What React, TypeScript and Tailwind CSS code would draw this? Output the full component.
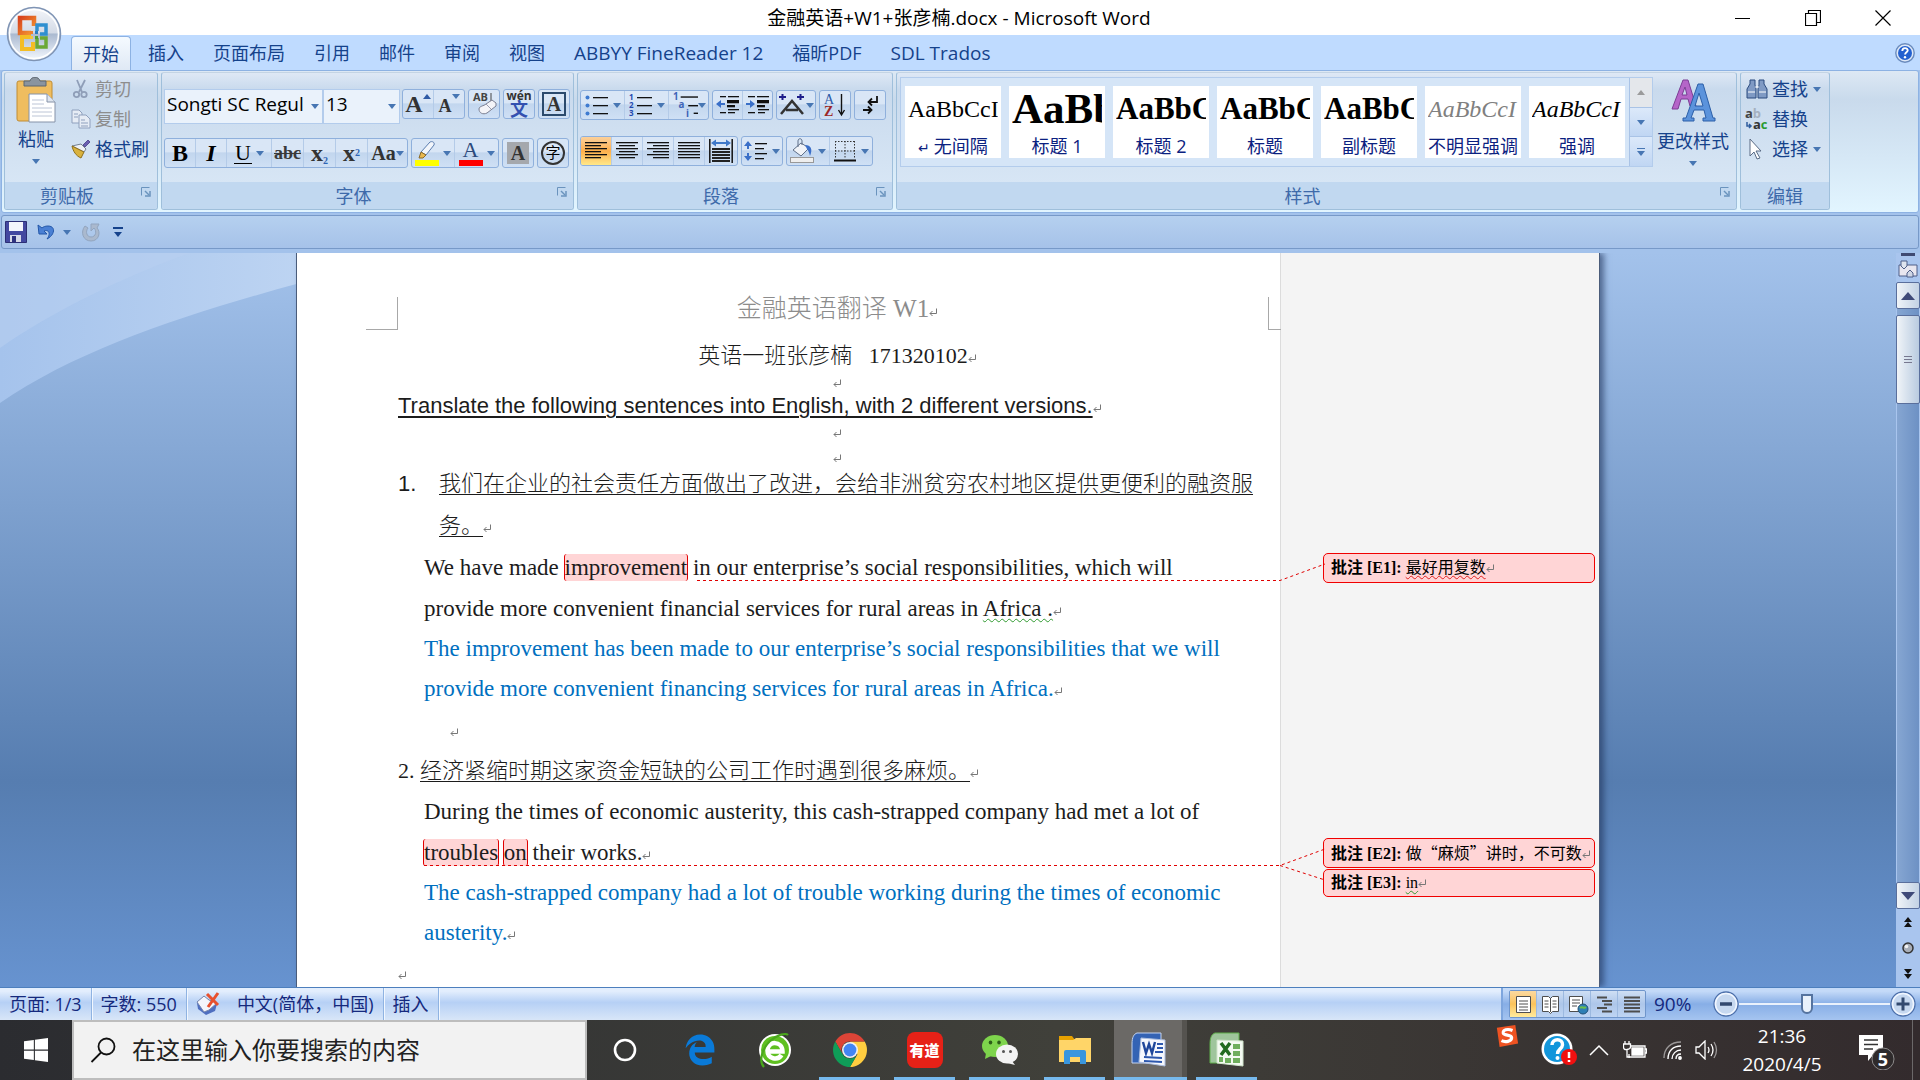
import type { ReactNode } from "react";
import { FaEdgeLegacy, FaWindows } from "react-icons/fa6";

const UI = "font-['Open_Sans','Noto_Sans_CJK_SC',sans-serif]";
const SERIF = "font-['Liberation_Serif','Noto_Sans_CJK_SC',serif]";

const tabs = [
  { name: "插入", size: "text-lg" },
  { name: "页面布局", size: "text-lg" },
  { name: "引用", size: "text-lg" },
  { name: "邮件", size: "text-lg" },
  { name: "审阅", size: "text-lg" },
  { name: "视图", size: "text-lg" },
  { name: "ABBYY FineReader 12", size: "text-[19px]" },
  { name: "福昕PDF", size: "text-lg" },
  { name: "SDL Trados", size: "text-[19px]" },
];

const styleCards = [
  { label: "无间隔", mark: true, look: "text-2xl text-black" },
  { label: "标题 1", look: "text-[43px] font-bold text-black" },
  { label: "标题 2", look: "text-[31px] font-bold text-black" },
  { label: "标题", look: "text-[31px] font-bold text-black" },
  { label: "副标题", look: "text-[31px] font-bold text-black" },
  { label: "不明显强调", look: "text-2xl italic text-[#808080]" },
  { label: "强调", look: "text-2xl italic text-black" },
];

const Caret = ({ className = "" }: { className?: string }) => (
  <svg viewBox="0 0 8 5" className={`h-[5px] w-2 shrink-0 ${className}`} fill="#4776b3">
    <path d="M0 0h8L4 5z" />
  </svg>
);

const Launcher = () => (
  <svg viewBox="0 0 10 10" className="h-2.5 w-2.5" fill="none" stroke="#6a93bd" strokeWidth="1">
    <path d="M.5 8.500V.5H8.500" />
    <path d="M4 4l4 4" strokeWidth="1.500" />
    <path d="M9 4v5H4" strokeWidth="1.500" />
  </svg>
);

// Titled box of the ribbon
const Group = ({
  title,
  width,
  launcher = true,
  children,
}: {
  title: string;
  width: string;
  launcher?: boolean;
  children: ReactNode;
}) => (
  <section
    className={`flex h-[138px] shrink-0 flex-col overflow-hidden rounded-[3px] border border-[#9fbfdb] border-t-[#c4d4e4] bg-linear-to-b from-[#dee8f5] from-0% via-[#c9daed] via-12% to-[#dbe9f7] ${width}`}
  >
    <div className="min-h-0 flex-1">{children}</div>
    <div className={`relative flex h-[27px] items-center justify-center bg-[#c1d8f0] ${launcher ? "pr-7" : ""}`}>
      <h2 className="text-lg leading-6 text-[#3e6aaa]">{title}</h2>
      {launcher && (
        <button aria-label={title} className="absolute top-[5px] right-[6px]">
          <Launcher />
        </button>
      )}
    </div>
  </section>
);

const ButtonSet = ({ children }: { children: ReactNode }) => (
  <div className="flex h-[30px] divide-x divide-[#b4cbe8] overflow-hidden rounded-[3px] border border-[#8fb0dc] bg-linear-to-b from-[#d9e6f6] from-45% via-[#c2d6ee] via-50% to-[#cfe0f5]">
    {children}
  </div>
);

const Tool = ({
  label,
  width = "w-[31px]",
  caret = false,
  active = false,
  children,
}: {
  label: string;
  width?: string;
  caret?: boolean;
  active?: boolean;
  children: ReactNode;
}) => (
  <button
    aria-label={label}
    className={`flex items-center justify-center ${width} ${caret ? "gap-1" : ""} ${
      active ? "bg-linear-to-b from-[#fbd09a] via-[#fdaf4b] to-[#ffe889]" : ""
    }`}
  >
    {children}
    {caret && <Caret />}
  </button>
);

// Rows of text drawn as [x, y, width]
const Lines = ({ rows, size = 24, children }: { rows: number[][]; size?: number; children?: ReactNode }) => (
  <svg viewBox="0 0 24 24" width={size} height={size} className="shrink-0">
    {rows.map(([x, y, w]) => (
      <rect key={`${x}-${y}`} x={x} y={y} width={w} height="1.300" fill="#111" />
    ))}
    {children}
  </svg>
);

const alignLeft = [[1, 3, 22], [1, 6, 16], [1, 9, 22], [1, 12, 16], [1, 15, 22], [1, 18, 16]];
const alignCenter = [[1, 3, 22], [4, 6, 16], [1, 9, 22], [4, 12, 16], [1, 15, 22], [4, 18, 16]];
const alignRight = [[1, 3, 22], [7, 6, 16], [1, 9, 22], [7, 12, 16], [1, 15, 22], [7, 18, 16]];
const alignFull = [[1, 3, 22], [1, 6, 22], [1, 9, 22], [1, 12, 22], [1, 15, 22], [1, 18, 22]];

const OfficeButton = () => (
  <button aria-label="Office" className="absolute top-1.5 left-1.5 z-10">
    <svg viewBox="0 0 56 56" className="h-14 w-14">
      <defs>
        <linearGradient id="orb" x1="0" y1="0" x2="0" y2="1">
          <stop offset="0" stopColor="#f4f6fa" />
          <stop offset=".48" stopColor="#d3dae6" />
          <stop offset=".5" stopColor="#aab9d0" />
          <stop offset="1" stopColor="#f5f9ff" />
        </linearGradient>
        <linearGradient id="warm" x1="0" y1="0" x2="1" y2="1">
          <stop offset="0" stopColor="#d8431c" />
          <stop offset="1" stopColor="#f59a33" />
        </linearGradient>
      </defs>
      <circle cx="28" cy="28" r="26.500" fill="url(#orb)" stroke="#7f94b4" strokeWidth="1.500" />
      <circle cx="28" cy="28" r="24.500" fill="none" stroke="#fff" strokeWidth="1.500" />
      <path d="M25 27h-11V12h14v8" fill="none" stroke="url(#warm)" strokeWidth="4.500" />
      <path d="M31 25v-6h9v9h-6" fill="none" stroke="#2e8fd0" strokeWidth="3.500" />
      <path d="M25 31h-9v12h11v-7" fill="none" stroke="#f3bd25" strokeWidth="4" />
      <path d="M31 32v9h9v-9h-6" fill="none" stroke="#6ba836" strokeWidth="3.500" />
      <path d="M24 25h3v3h-3z" fill="#f2802a" />
      <path d="M29 25h3v3h-3z" fill="#2a7cc0" />
      <path d="M24 30h3v3h-3z" fill="#f4c63c" />
      <path d="M29 30h3v3h-3z" fill="#4f9c30" />
    </svg>
  </button>
);

const TitleBar = () => (
  <header className="flex h-[35px] items-center bg-white text-black">
    <div className="flex-1" />
    <h1 className="text-[19px] leading-6">金融英语+W1+张彦楠.docx - Microsoft Word</h1>
    <div className="flex flex-1 justify-end pr-0.5">
      <button aria-label="最小化" className="flex w-[70px] justify-center">
        <svg viewBox="0 0 16 16" className="h-4 w-4" stroke="#000">
          <path d="M0 8.500h15" />
        </svg>
      </button>
      <button aria-label="还原" className="flex w-[70px] justify-center">
        <svg viewBox="0 0 16 16" className="h-4 w-4" fill="none" stroke="#000" strokeWidth="1.200">
          <path d="M.5 3.500h11v12H.5zM3.500 3.500v-3h12v12h-4" />
        </svg>
      </button>
      <button aria-label="关闭" className="flex w-[70px] justify-center">
        <svg viewBox="0 0 16 16" className="h-4 w-4" stroke="#000" strokeWidth="1.200">
          <path d="M.5.5l15 15M15.500.5l-15 15" />
        </svg>
      </button>
    </div>
  </header>
);

const TabRow = () => (
  <nav className="flex h-[35px] items-end bg-[#bfdbff] pl-[71px] text-lg leading-6 text-[#15428b]">
    <a
      href="#home"
      className="flex h-[34px] w-[60px] items-center justify-center rounded-t-[4px] border border-b-0 border-[#8db2e3] bg-linear-to-b from-[#f5faff] to-[#dfe9f5]"
    >
      开始
    </a>
    <div className="flex h-[34px] items-center gap-[29px] pl-[17px]">
      {tabs.map((tab) => (
        <a key={tab.name} href="#tab" className={`whitespace-nowrap ${tab.size}`}>
          {tab.name}
        </a>
      ))}
    </div>
    <button aria-label="帮助" className="mr-[5px] mb-[7px] ml-auto">
      <svg viewBox="0 0 20 20" className="h-5 w-5">
        <circle cx="10" cy="10" r="9.200" fill="#dfe9f8" stroke="#6a8bbd" strokeWidth="1.400" />
        <circle cx="10" cy="10" r="7" fill="#2360cf" />
        <path d="M7.300 8c0-4 5.600-3.600 5.400-.5-.2 1.800-2.600 1.800-2.600 4" fill="none" stroke="#fff" strokeWidth="1.900" />
        <circle cx="10" cy="14.200" r="1.200" fill="#fff" />
      </svg>
    </button>
  </nav>
);

const Clipboard = () => (
  <Group title="剪贴板" width="w-[154px]">
    <div className="flex pl-[11px] text-lg leading-6 text-[#15428b]">
      <button className="flex w-10 flex-col items-center pt-1">
        <svg viewBox="0 0 40 46" className="h-[46px] w-10">
          <rect x="1" y="4" width="35" height="40" rx="2" fill="#efbd5f" stroke="#c08c34" />
          <path d="M8 4h6c1-5 9-5 10 0h6v5H8z" fill="#8a949f" stroke="#5d6670" />
          <path d="M13 17h18l8 8v20H13z" fill="#fff" stroke="#8592a8" />
          <path d="M31 17v8h8" fill="#dfe5ee" stroke="#8592a8" />
          <path d="M16 23h12M16 27h12M16 31h20M16 35h20M16 39h20" stroke="#bcc5d6" />
        </svg>
        <span className="-mx-2 pt-1 whitespace-nowrap">粘贴</span>
        <Caret className="mt-2" />
      </button>
      <div className="flex flex-col items-start gap-1.5 pt-1 pl-[15px]">
        <button className="flex items-center gap-1 text-[#8d8d8d]">
          <svg viewBox="0 0 20 20" className="h-5 w-5" fill="none" stroke="#8f9eb8" strokeWidth="1.800">
            <path d="M6 1l5 12M14 1L8 13" />
            <circle cx="5.500" cy="15.500" r="2.700" />
            <circle cx="13" cy="15.500" r="2.700" />
          </svg>
          剪切
        </button>
        <button className="flex items-center gap-1 text-[#8d8d8d]">
          <svg viewBox="0 0 20 20" className="h-5 w-5" fill="#e6ecf5" stroke="#8fa0bd">
            <path d="M1 1h7l3 3v10H1z" />
            <path d="M8 6h7l4 4v9H8z" />
            <path d="M3 5h4M3 8h4M10 11h4M10 14h7M10 17h7" />
          </svg>
          复制
        </button>
        <button className="flex items-center gap-1">
          <svg viewBox="0 0 20 20" className="h-5 w-5">
            <path d="M12 6l5-5 2 2-5 5z" fill="#6b5fb0" stroke="#453c86" strokeWidth=".8" />
            <path d="M1 7l9-2 5 5-2 3z" fill="#eef1f5" stroke="#74808f" />
            <path d="M1 7l12 6-3 6C5 17 2 12 1 7z" fill="#d9b23e" stroke="#8e6f1c" />
          </svg>
          格式刷
        </button>
      </div>
    </div>
  </Group>
);

const FontGroup = () => (
  <Group title="字体" width="w-[413px]">
    <div className="flex flex-col gap-3.5 pt-4 pl-0.5 text-black">
      <div className="flex items-start gap-[3px]">
        <div className="-mr-px flex">
          <label className="relative flex">
            <select
              aria-label="字体"
              className="h-[35px] w-[159px] appearance-none overflow-hidden border border-[#b3ccec] bg-[#eaf2fb] pr-4 pb-1.5 pl-0.5 text-[19px] leading-6"
            >
              <option>Songti SC Regul</option>
            </select>
            <Caret className="pointer-events-none absolute top-[15px] right-1" />
          </label>
          <label className="relative flex">
            <select
              aria-label="字号"
              className="h-[35px] w-[77px] appearance-none border border-[#b3ccec] bg-[#eaf2fb] pb-1.5 pl-0.5 text-[19px] leading-6"
            >
              <option>13</option>
            </select>
            <Caret className="pointer-events-none absolute top-[15px] right-1" />
          </label>
        </div>
        <ButtonSet>
          <Tool label="增大字体">
            <span className={`${SERIF} text-2xl leading-7 font-bold text-[#333]`}>A</span>
            <svg viewBox="0 0 8 5" className="mb-4 h-[5px] w-2" fill="#2e5aa5">
              <path d="M0 5h8L4 0z" />
            </svg>
          </Tool>
          <Tool label="缩小字体" width="w-[30px]">
            <span className={`${SERIF} pt-1 text-lg leading-6 font-bold text-[#333]`}>A</span>
            <Caret className="mb-4" />
          </Tool>
        </ButtonSet>
        <ButtonSet>
          <Tool label="清除格式" width="w-[30px]">
            <svg viewBox="0 0 28 28" className="h-7 w-7">
              <text x="3" y="11" fontSize="11" fontWeight="bold" fill="#444">
                AB
              </text>
              <path d="M21 3v9" stroke="#444" />
              <path d="M9 19c0-3 5-3 7-5l6-4 4 3v3l-9 7c-4 2-8 0-8-4z" fill="#f4f4f8" stroke="#7b7f92" />
              <path d="M16 14l5 5" stroke="#9a9db0" />
            </svg>
          </Tool>
        </ButtonSet>
        <ButtonSet>
          <Tool label="拼音指南" width="w-[30px]">
            <span className="flex flex-col items-center">
              <span className="text-xs leading-[10px] font-bold text-[#333]">wén</span>
              <span className="text-lg leading-4 font-bold text-[#3350b0]">文</span>
            </span>
          </Tool>
        </ButtonSet>
        <ButtonSet>
          <Tool label="字符边框" width="w-[30px]">
            <span className={`${SERIF} h-6 w-6 border-2 border-[#2b4a6d] text-xl leading-5 font-bold text-[#333]`}>A</span>
          </Tool>
        </ButtonSet>
      </div>
      <div className={`${SERIF} flex gap-[3px]`}>
        <ButtonSet>
          <Tool label="加粗">
            <span className="text-2xl leading-7 font-bold">B</span>
          </Tool>
          <Tool label="倾斜">
            <span className="text-2xl leading-7 font-bold italic">I</span>
          </Tool>
          <Tool label="下划线" width="w-[45px]" caret>
            <span className="border-b border-black px-px text-[22px] leading-5">U</span>
          </Tool>
          <Tool label="删除线" width="w-8">
            <span className="text-lg leading-6 font-bold text-[#3a3a3a] line-through">abc</span>
          </Tool>
          <Tool label="下标" width="w-8">
            <span className="text-2xl leading-6 font-bold text-[#333]">
              x<sub className="text-[10px] text-[#2e64b4]">2</sub>
            </span>
          </Tool>
          <Tool label="上标" width="w-8">
            <span className="text-2xl leading-6 font-bold text-[#333]">
              x<sup className="text-[10px] text-[#2e64b4]">2</sup>
            </span>
          </Tool>
          <button aria-label="更改大小写" className="flex w-[39px] items-center justify-center">
            <span className="text-xl leading-6 font-bold text-[#333]">Aa</span>
            <Caret />
          </button>
        </ButtonSet>
        <ButtonSet>
          <Tool label="突出显示" width="w-[43px]" caret>
            <svg viewBox="0 0 24 26" className="h-[26px] w-6">
              <rect y="20" width="24" height="6" fill="#ff0" />
              <path d="M6 12l9-10c2-1 5 0 4 3l-8 10z" fill="#f3f6fb" stroke="#5b7daf" />
              <path d="M6 12l5 3-3 3H4z" fill="#e9b84e" stroke="#8b6a28" />
            </svg>
          </Tool>
          <Tool label="字体颜色" width="w-[43px]" caret>
            <span className="flex flex-col items-center text-[#2c4a7c]">
              <span className="text-[22px] leading-5">A</span>
              <span className="h-1.5 w-6 bg-[#f00]" />
            </span>
          </Tool>
        </ButtonSet>
        <ButtonSet>
          <Tool label="字符底纹" width="w-[30px]">
            <span className="h-[22px] w-[22px] bg-[#a5a8ad] text-xl leading-[22px] font-bold text-[#333]">A</span>
          </Tool>
        </ButtonSet>
        <ButtonSet>
          <Tool label="带圈字符" width="w-[30px]">
            <span className="h-6 w-6 rounded-full border-2 border-[#333] text-[15px] leading-5">字</span>
          </Tool>
        </ButtonSet>
      </div>
    </div>
  </Group>
);

const ParagraphGroup = () => (
  <Group title="段落" width="w-[316px]">
    <div className="flex flex-col gap-4 pt-[17px] pl-0.5">
      <div className="flex gap-[3px]">
        <ButtonSet>
          <Tool label="项目符号" width="w-[44px]" caret>
            <Lines rows={[[8, 4, 15], [8, 12, 15], [8, 20, 15]]}>
              <g fill="#3f7bd0">
                <circle cx="2.500" cy="4.500" r="2" />
                <circle cx="2.500" cy="12.500" r="2" />
                <circle cx="2.500" cy="20.500" r="2" />
              </g>
            </Lines>
          </Tool>
          <Tool label="编号" width="w-[44px]" caret>
            <Lines rows={[[8, 4, 15], [8, 12, 15], [8, 20, 15]]}>
              <g fill="#2449b0" fontSize="8" fontWeight="bold">
                <text x="0" y="7">1</text>
                <text x="0" y="15">2</text>
                <text x="0" y="23">3</text>
              </g>
            </Lines>
          </Tool>
          <button aria-label="多级列表" className="flex w-[39px] items-center justify-center">
            <Lines rows={[[8, 4, 16], [15, 12, 9], [20, 19, 4]]} size={26}>
              <g fill="#3f64b8" fontSize="9" fontWeight="bold">
                <text x="1" y="7">1</text>
                <text x="6" y="15">a</text>
                <text x="13" y="23">i</text>
              </g>
            </Lines>
            <Caret />
          </button>
        </ButtonSet>
        <ButtonSet>
          <Tool label="减少缩进量" width="w-[30px]">
            <Lines rows={[[4, 3, 6], [12, 3, 11], [11, 7, 12], [11, 8, 12], [11, 9, 12], [11, 12, 8], [11, 13, 8], [12, 16, 11], [4, 19, 6], [12, 19, 7]]}>
              <path d="M0 11l5-4v3h4v2H5v3z" fill="#3a6fc8" />
            </Lines>
          </Tool>
          <Tool label="增加缩进量" width="w-[29px]">
            <Lines rows={[[2, 3, 7], [11, 3, 12], [11, 7, 12], [11, 8, 12], [11, 9, 12], [11, 12, 8], [11, 13, 8], [12, 16, 11], [2, 19, 7], [12, 19, 7]]}>
              <path d="M9 11L4 7v3H0v2h4v3z" fill="#3a6fc8" />
            </Lines>
          </Tool>
        </ButtonSet>
        <ButtonSet>
          <button aria-label="中文版式" className="flex w-[38px] items-center justify-center">
            <svg viewBox="0 0 28 26" className="h-[26px] w-7" fill="none" stroke="#333" strokeWidth="2.500">
              <path d="M3 22L14 9l11 13M8 18h12" />
              <path d="M1 5h7M4.500 2v6M19 5h7M22.500 2v6" stroke="#1d1d8a" strokeWidth="2" />
            </svg>
            <Caret />
          </button>
        </ButtonSet>
        <ButtonSet>
          <Tool label="排序" width="w-[30px]">
            <svg viewBox="0 0 24 26" className={`h-[26px] w-6 ${SERIF}`}>
              <text x="1" y="12" fontSize="14" fill="#2c5aa8">A</text>
              <text x="1" y="24" fontSize="14" fontWeight="bold" fill="#9c2727">Z</text>
              <path d="M18.500 2v20M15.500 18l3 5 3-5" fill="none" stroke="#111" strokeWidth="1.400" />
            </svg>
          </Tool>
        </ButtonSet>
        <ButtonSet>
          <Tool label="显示编辑标记" width="w-[30px]">
            <svg viewBox="0 0 24 26" className="h-[26px] w-6" fill="none" stroke="#111" strokeWidth="1.800">
              <path d="M19 4v6h-8M14 6.500L10.500 10l3.500 3.500M5 18h8M10 14.500l3.500 3.500-3.500 3.500" />
            </svg>
          </Tool>
        </ButtonSet>
      </div>
      <div className="flex gap-[3px]">
        <ButtonSet>
          <Tool label="左对齐" active>
            <Lines rows={alignLeft} />
          </Tool>
          <Tool label="居中">
            <Lines rows={alignCenter} />
          </Tool>
          <Tool label="右对齐">
            <Lines rows={alignRight} />
          </Tool>
          <Tool label="两端对齐">
            <Lines rows={alignFull} />
          </Tool>
          <Tool label="分散对齐" width="w-8">
            <svg viewBox="0 0 24 24" className="h-6 w-6">
              <path d="M.8 0v24M23.200 0v24" stroke="#111" strokeWidth="1.500" />
              <path d="M2 4l5-3.500V3h10V.5L22 4l-5 3.500V5H7v2.500z" fill="#3f78c8" />
              <path d="M3 10h18M3 13h18M3 16h18M3 19h18M3 22h18" stroke="#222" strokeWidth="1.800" />
            </svg>
          </Tool>
        </ButtonSet>
        <ButtonSet>
          <Tool label="行距" width="w-10" caret>
            <Lines rows={[[11, 4, 12], [11, 9, 9], [11, 14, 12], [11, 19, 9]]}>
              <path d="M4 2l4 5H5v3H3V7H0zM4 22l4-5H5v-3H3v3H0z" fill="#3a6fc8" />
            </Lines>
          </Tool>
        </ButtonSet>
        <ButtonSet>
          <Tool label="底纹" width="w-[43px]" caret>
            <svg viewBox="0 0 24 26" className="h-[26px] w-6">
              <rect x=".5" y="19.500" width="23" height="5" fill="#eee" stroke="#999" />
              <path d="M3 12l8-7 8 5-8 8z" fill="#f0f3f8" stroke="#5f6f88" />
              <path d="M8 9V3c0-3 4-3 4 0v4" fill="none" stroke="#5f6f88" />
              <path d="M15 7c6 0 8 4 5 11-1-4-2-6-3-7z" fill="#3b6fc9" />
            </svg>
          </Tool>
          <Tool label="框线" width="w-[42px]" caret>
            <svg viewBox="0 0 24 26" className="h-[26px] w-6" fill="none" stroke="#333">
              <path d="M2 3.500h20M2 13h20M2.500 3v18M12 3v18M21.500 3v18" strokeDasharray="1.500 1.500" />
              <path d="M1 22.500h22" stroke="#111" strokeWidth="2" />
            </svg>
          </Tool>
        </ButtonSet>
      </div>
    </div>
  </Group>
);

const StylesGroup = () => (
  <Group title="样式" width="w-[841px]">
    <div className="flex pt-1 pl-[3px]">
      <div className="flex h-[90px] border border-[#b3ccec] bg-[#d5e5f7]">
        <div className="flex gap-2 py-2 pr-1 pl-1">
          {styleCards.map((card) => (
            <button
              key={card.label}
              className="flex h-[72px] w-24 flex-col overflow-hidden bg-white text-[#0b2180]"
            >
              <span className="flex h-12 w-full px-[3px]">
                <span className={`${SERIF} w-full overflow-hidden text-left leading-[46px] whitespace-nowrap ${card.look}`}>
                  AaBbCcI
                </span>
              </span>
              <span className="w-full text-center text-lg leading-6 whitespace-nowrap">
                {card.mark && <span className="text-sm">↵ </span>}
                {card.label}
              </span>
            </button>
          ))}
        </div>
        <div className="flex w-[23px] flex-col divide-y divide-[#a9c3e6] border-l border-[#a9c3e6]">
          <button aria-label="上一行" className="flex flex-1 items-center justify-center bg-[#e4e7eb]">
            <svg viewBox="0 0 8 5" className="h-[5px] w-2" fill="#9b9b9b">
              <path d="M0 5h8L4 0z" />
            </svg>
          </button>
          <button aria-label="下一行" className="flex flex-1 items-center justify-center bg-linear-to-b from-[#dce9fa] to-[#c0d6f3]">
            <Caret />
          </button>
          <button
            aria-label="其他"
            className="flex flex-1 flex-col items-center justify-center gap-0.5 bg-linear-to-b from-[#dce9fa] to-[#c0d6f3]"
          >
            <span className="h-px w-2 bg-[#4776b3]" />
            <Caret />
          </button>
        </div>
      </div>
      <button className="flex w-20 flex-col items-center text-lg leading-6 text-[#15428b]">
        <svg viewBox="0 0 46 46" className="h-[46px] w-[46px]">
          <path d="M2 32L13 3h5l8 26h-6l-2-7h-7l-3 10zM12 18h5l-2-8z" fill="#b565c8" stroke="#7c3d95" />
          <path d="M13 44v-3h3L28 7h5l10 34h2v3H33v-3h3l-2-8H24l-3 8h3v3zM25 29h8l-4-13z" fill="#5b93dc" stroke="#2c5fa8" />
        </svg>
        <span className="pt-1.5 whitespace-nowrap">更改样式</span>
        <Caret className="mt-2" />
      </button>
    </div>
  </Group>
);

const EditingGroup = () => (
  <Group title="编辑" width="w-[90px]" launcher={false}>
    <div className="flex flex-col items-start gap-1.5 pt-1 pl-1 text-lg leading-6 text-[#15428b]">
      <button className="flex items-center gap-[3px]">
        <svg viewBox="0 0 24 22" className="h-[22px] w-6" stroke="#2b4a7e" fill="#7f9ac4">
          <path d="M5 2h5v5l1 4v9H2v-9l3-5zM14 2h5v4l3 5v9h-9v-9l1-4z" />
          <path d="M3 14h7M14 14h7M10 9h4" stroke="#fff" />
        </svg>
        查找
        <Caret className="ml-0.5" />
      </button>
      <button className="flex items-center gap-[3px]">
        <svg viewBox="0 0 24 24" className="h-6 w-6" fontSize="13" fontWeight="bold">
          <text x="0" y="11" fill="#444">
            a<tspan fill="#a5b0bf">b</tspan>
          </text>
          <text x="8" y="22" fill="#333">
            a<tspan fill="#2a9a32">c</tspan>
          </text>
          <path d="M2 15v4h4M4 17l2 2-2 2" fill="none" stroke="#2f5d9e" strokeWidth="1.500" />
        </svg>
        替换
      </button>
      <button className="flex items-center gap-[3px]">
        <svg viewBox="0 0 24 24" className="h-6 w-6">
          <path d="M5 2l11 12h-5l4 7-3 1-3-7-4 4z" fill="#fff" stroke="#5a6b85" />
        </svg>
        选择
        <Caret className="ml-0.5" />
      </button>
    </div>
  </Group>
);

const QuickAccess = () => (
  <div className="mx-px mt-0.5 flex h-[34px] items-center rounded-[3px] border border-[#7799c8] bg-linear-to-b from-[#b5d0ef] to-[#a6c2e9] pl-[3px]">
    <button aria-label="保存">
      <svg viewBox="0 0 22 22" className="h-[22px] w-[22px]">
        <path d="M.5.5h21v21H.5z" fill="#4348a0" stroke="#2c2f75" />
        <path d="M4 1h14v9H4z" fill="#f3f6fc" />
        <path d="M5 14h11v7H5z" fill="#d6d9e8" />
        <path d="M7 15h4v6H7z" fill="#2f3380" />
      </svg>
    </button>
    <button aria-label="撤消" className="ml-2.5">
      <svg viewBox="0 0 20 20" className="h-5 w-5">
        <path d="M1 3l1 9h8L7 9c5-2 7 3 3 8 8-4 9-13 1-13-3 0-5 1-6 2z" fill="#4a80d4" stroke="#2357a8" />
      </svg>
    </button>
    <Caret className="ml-1.5" />
    <button aria-label="恢复" className="ml-2.5">
      <svg viewBox="0 0 20 20" className="h-5 w-5">
        <path d="M18 2h-8v7l3-3c3 3 2 9-3 9-4 0-6-5-3-9L4 4c-5 6-2 15 6 15s10-9 6-13z" fill="#aab9ce" stroke="#92a5bf" />
      </svg>
    </button>
    <button aria-label="自定义快速访问工具栏" className="ml-3 flex flex-col items-center gap-[3px]">
      <span className="h-0.5 w-2.5 bg-[#15428b]" />
      <svg viewBox="0 0 8 5" className="h-[5px] w-2" fill="#15428b">
        <path d="M0 0h8L4 5z" />
      </svg>
    </button>
  </div>
);

// Paragraph mark. It has no width so that centred lines stay centred.
const Mark = () => (
  <span className="inline-block w-0 align-baseline leading-none">
    <svg viewBox="0 0 9 9" className="h-[9px] w-[9px] max-w-none" fill="none" stroke="#777">
      <path d="M7.500.5v5H1M3.500 3L1 5.500 3.500 8" />
    </svg>
  </span>
);

const Noted = ({ children }: { children: ReactNode }) => (
  <span className="-mx-px rounded-[3px] border-x border-[#e00000] bg-[#ffd5d6] py-px">{children}</span>
);

const Comment = ({ name, size, children }: { name: string; size: string; children: ReactNode }) => (
  <p className={`flex items-center rounded-[5px] border border-[#f00000] bg-[#ffd5d6] pl-[7px] whitespace-nowrap ${size}`}>
    <span>
      <b>批注 [{name}]: </b>
      {children}
      <Mark />
    </span>
  </p>
);

const Page = () => (
  <article className={`relative flex w-[1304px] shrink-0 overflow-hidden border-x border-[#4a5c7a] bg-white shadow-[4px_0_6px_rgba(30,50,90,0.6)] ${SERIF}`}>
    <span className="absolute top-11 left-[69px] h-[33px] w-8 border-r border-b border-[#a8a8a8]" />
    <span className="absolute top-11 left-[971px] h-[33px] w-[13px] border-b border-l border-[#a8a8a8]" />

    <div className="flex-1 pt-[22px] pr-3 pl-[101px] text-[22px] font-light whitespace-nowrap text-[#1c1c1c]">
      <h2 className="text-center text-[25px] leading-[68px] text-[#8c8c8c]">
        金融英语翻译 W1
        <Mark />
      </h2>
      <p className="text-center leading-[25px]">
        英语一班张彦楠&nbsp;&nbsp; 171320102
        <Mark />
      </p>
      <p className="text-center leading-[25px]">
        <Mark />
      </p>
      <p className="font-['Liberation_Sans',sans-serif] leading-[25px]">
        <span className="underline decoration-2 underline-offset-[3px]">
          Translate the following sentences into English, with 2 different versions.
        </span>
        <Mark />
      </p>
      <p className="text-center leading-[25px]">
        <Mark />
      </p>
      <p className="text-center leading-[25px]">
        <Mark />
      </p>
      <div className="-mt-[5px] flex leading-[42px]">
        <span className="w-[41px] font-['Liberation_Sans',sans-serif]">1.</span>
        <p className="underline decoration-1 underline-offset-[3px]">
          我们在企业的社会责任方面做出了改进，会给非洲贫穷农村地区提供更便利的融资服
          <br />
          务。
          <Mark />
        </p>
      </div>
      <div className="pl-[26px] text-[23px]">
        <p className="leading-[41px]">
          We have made <Noted>improvement</Noted> in our enterprise’s social responsibilities, which will
          <br />
          provide more convenient financial services for rural areas in{" "}
          <span className="underline decoration-[#2f9a2f] decoration-wavy decoration-1 underline-offset-2">Africa .</span>
          <Mark />
        </p>
        <p className="leading-10 text-[#0070c0]">
          The improvement has been made to our enterprise’s social responsibilities that we will
          <br />
          provide more convenient financing services for rural areas in Africa.
          <Mark />
        </p>
        <p className="pl-[26px] leading-[41px]">
          <Mark />
        </p>
      </div>
      <p className="leading-[41px]">
        2.{" "}
        <span className="underline decoration-1 underline-offset-[3px]">
          经济紧缩时期这家资金短缺的公司工作时遇到很多麻烦。
        </span>
        <Mark />
      </p>
      <div className="pl-[26px] text-[23px]">
        <p className="leading-[41px]">
          During the times of economic austerity, this cash-strapped company had met a lot of
          <br />
          <Noted>troubles</Noted> <Noted>on</Noted> their works.
          <Mark />
        </p>
        <p className="leading-10 text-[#0070c0]">
          The cash-strapped company had a lot of trouble working during the times of economic
          <br />
          austerity.
          <Mark />
        </p>
      </div>
      <p className="leading-10">
        <Mark />
      </p>
    </div>

    <aside className="flex w-[319px] shrink-0 flex-col border-l border-[#dcdcdc] bg-[#f4f4f4] pt-[300px] pr-1 pl-[42px] text-base leading-6 text-black">
      <Comment name="E1" size="h-[30px]">
        <span className="underline decoration-[#e02020] decoration-wavy decoration-1 underline-offset-2">最好用复数</span>
      </Comment>
      <div className="h-[255px]" />
      <Comment name="E2" size="h-[30px]">
        <span className="font-['Noto_Sans_CJK_SC',sans-serif]">做“麻烦”讲时，不可数</span>
      </Comment>
      <Comment name="E3" size="mt-px h-7">
        <span className="underline decoration-[#2f9a2f] decoration-wavy decoration-1 underline-offset-2">in</span>
      </Comment>
    </aside>

    {/* leader lines from the text to the comment balloons */}
    <svg className="pointer-events-none absolute top-0 left-0 h-full w-full" fill="none" stroke="#e00000" strokeDasharray="3 3">
      <path d="M400 327.500H983L1028 311" />
      <path d="M127 612.500H983L1028 596M983 612.500L1028 627" />
    </svg>
  </article>
);

const ScrollBar = () => (
  <div className="flex w-6 shrink-0 flex-col items-center bg-[#a9c5ee]">
    <span className="h-[3px] w-3.5 shrink-0 bg-[#3f4a72]" />
    <button aria-label="标尺" className="pt-1">
      <svg viewBox="0 0 20 18" className="h-[18px] w-5">
        <path d="M1 5h18v11H1z" fill="#e8e6ef" stroke="#4f5f88" />
        <path d="M3 1h6v5L6 9 3 6z" fill="#dfe4ee" stroke="#4f5f88" />
        <path d="M9 13l3-3 3 3v4H9z" fill="#cfd6e6" stroke="#4f5f88" />
      </svg>
    </button>
    <button
      aria-label="向上滚动"
      className="mt-1 flex h-[27px] w-6 shrink-0 items-center justify-center rounded-[2px] border border-[#5a6f9c] bg-linear-to-r from-[#f0f4f8] to-[#c3d2e4]"
    >
      <svg viewBox="0 0 14 8" className="h-2 w-3.5" fill="#3f4a78">
        <path d="M0 8h14L7 0z" />
      </svg>
    </button>
    <div className="flex w-[22px] flex-1 flex-col items-center bg-linear-to-r from-[#86a6d2] to-[#6d91c4] pt-1.5">
      <div className="flex h-[89px] w-6 flex-col items-center justify-center gap-0.5 rounded-[2px] border border-[#5a6f9c] bg-linear-to-r from-[#f0f4f8] to-[#b9cbe0]">
        <span className="h-px w-2 bg-[#77788f]" />
        <span className="h-px w-2 bg-[#77788f]" />
        <span className="h-px w-2 bg-[#77788f]" />
      </div>
    </div>
    <button
      aria-label="向下滚动"
      className="flex h-[27px] w-6 shrink-0 items-center justify-center rounded-[2px] border border-[#5a6f9c] bg-linear-to-r from-[#f0f4f8] to-[#c3d2e4]"
    >
      <svg viewBox="0 0 14 8" className="h-2 w-3.5" fill="#3f4a78">
        <path d="M0 0h14L7 8z" />
      </svg>
    </button>
    <div className="flex h-[78px] shrink-0 flex-col items-center justify-between pt-2 pb-2">
      <button aria-label="上一页">
        <svg viewBox="0 0 8 10" className="h-2.5 w-2" fill="#111">
          <path d="M0 5h8L4 0zM0 10h8L4 5z" />
        </svg>
      </button>
      <button aria-label="选择浏览对象">
        <svg viewBox="0 0 12 12" className="h-3 w-3">
          <circle cx="6" cy="6" r="5" fill="#a8aeb8" stroke="#333" strokeWidth="1.500" />
          <circle cx="4.500" cy="4.500" r="1.800" fill="#f3f3f3" />
        </svg>
      </button>
      <button aria-label="下一页">
        <svg viewBox="0 0 8 10" className="h-2.5 w-2" fill="#111">
          <path d="M0 0h8L4 5zM0 5h8l-4 5z" />
        </svg>
      </button>
    </div>
  </div>
);

const Workspace = () => (
  <main className="relative flex min-h-0 flex-1 overflow-hidden bg-linear-to-b from-[#a3c2eb] from-0% via-[#567db0] via-72% to-[#6793d0]">
    <svg viewBox="0 0 300 734" preserveAspectRatio="none" className="absolute top-0 left-0 h-full w-[300px]">
      <defs>
        <linearGradient id="sweep" x1="0" y1="0" x2="1" y2="0">
          <stop offset="0" stopColor="#a5c3ec" />
          <stop offset="1" stopColor="#bdd4f2" />
        </linearGradient>
      </defs>
      <path d="M0 0h300v30C190 60 80 95 0 150z" fill="url(#sweep)" />
      <path d="M0 0h190C120 25 50 60 0 95z" fill="#b7cff0" opacity=".6" />
    </svg>
    <div className="relative flex min-w-0 flex-1 justify-center overflow-hidden">
      <Page />
    </div>
    <ScrollBar />
  </main>
);

const StatusItem = ({ children }: { children: ReactNode }) => (
  <span className="flex h-full items-center border-r border-[#8fb3e2] px-[9px] shadow-[1px_0_0_#f1f7ff]">{children}</span>
);

const viewIcons = [
  <path key="p" d="M4.500 3.500h14v16h-14zM7 8h9M7 11h9M7 14h9M7 17h9" />,
  <path key="r" d="M11.500 5v14M3.500 3.500h6l2 2 2-2h6v15h-6l-2 2-2-2h-6zM5.500 8h4M5.500 11h4M5.500 14h4M13.500 8h4M13.500 11h4M13.500 14h4" />,
  <g key="w">
    <path d="M3.500 3.500h13v15h-13zM6 7h8M6 10h8M6 13h5" />
    <circle cx="17" cy="16" r="5" fill="#2f7fb5" stroke="#1e4f76" />
    <path d="M14 15c2-2 4 1 6-1" stroke="#6cc04a" strokeWidth="2" />
  </g>,
  <path key="o" d="M4 4.500h10M9 8h10M11 11.500h8M4 15h10M9 18.500h10" strokeWidth="2" />,
  <path key="d" d="M4 4.500h16M4 8h16M4 11.500h16M4 15h16M4 18.500h16" strokeWidth="2" />,
];

const StatusBar = () => (
  <footer className="flex h-[33px] shrink-0 items-center border-t border-[#4d7fbd] bg-linear-to-b from-[#e3eefd] from-10% via-[#b6d0f5] via-45% to-[#d8e6f8] text-lg leading-6 text-[#15297d]">
    <StatusItem>页面: 1/3</StatusItem>
    <StatusItem>字数: 550</StatusItem>
    <StatusItem>
      <svg viewBox="0 0 24 24" className="mr-[17px] h-6 w-6">
        <path d="M1 11l8-5 12 6-2 7-9 4-8-6z" fill="#4f6fc0" />
        <path d="M1 10l7-6 5 4 8 3-8 7-5 2z" fill="#f4f6fb" stroke="#7585ad" />
        <path d="M11 2l11 11M22 1L12 15" stroke="#e8512e" strokeWidth="3" />
      </svg>
      中文(简体，中国)
    </StatusItem>
    <StatusItem>插入</StatusItem>
    <div className="ml-auto flex h-full items-center border-l-2 border-[#7ea6de] bg-linear-to-b from-[#c4daf8] from-10% via-[#87aee6] via-50% to-[#a5c4f0] pr-1 pl-1.5">
      <div className="flex h-7 divide-x divide-[#9cb9e0] rounded-[2px] border border-[#6f95cb] bg-linear-to-b from-[#cfdff4] via-[#adc6ea] to-[#bfd5f3]">
        {viewIcons.map((icon, i) => (
          <button
            key={i}
            aria-label={`视图 ${i + 1}`}
            className={`flex w-[27px] items-center justify-center ${i === 0 ? "bg-linear-to-b from-[#fbd9a0] via-[#fbc35a] to-[#ffeb9c]" : ""}`}
          >
            <svg viewBox="0 0 23 23" className="h-[23px] w-[23px]" fill={i < 3 ? "#fff" : "none"} stroke="#4e4e4e">
              {icon}
            </svg>
          </button>
        ))}
      </div>
      <button className="w-[67px] pl-2 text-left text-[19px]">90%</button>
      <button aria-label="缩小">
        <svg viewBox="0 0 26 26" className="h-[26px] w-[26px]">
          <circle cx="13" cy="13" r="12" fill="#c6d8f0" stroke="#4d70ab" strokeWidth="1.300" />
          <circle cx="13" cy="13" r="10.500" fill="none" stroke="#f0f6ff" strokeWidth="1.500" />
          <path d="M7 13h12" stroke="#32496f" strokeWidth="3.500" />
        </svg>
      </button>
      <input
        type="range"
        aria-label="显示比例"
        min="10"
        max="190"
        defaultValue="90"
        className="h-6 w-[151px] appearance-none bg-[linear-gradient(#e9f1fc,#e9f1fc)] bg-[length:100%_2px] bg-center bg-no-repeat [&::-webkit-slider-thumb]:h-5 [&::-webkit-slider-thumb]:w-3 [&::-webkit-slider-thumb]:appearance-none [&::-webkit-slider-thumb]:rounded-b-[6px] [&::-webkit-slider-thumb]:border-2 [&::-webkit-slider-thumb]:border-[#55739f] [&::-webkit-slider-thumb]:bg-[#e9f1fb]"
      />
      <button aria-label="放大">
        <svg viewBox="0 0 26 26" className="h-[26px] w-[26px]">
          <circle cx="13" cy="13" r="12" fill="#c6d8f0" stroke="#4d70ab" strokeWidth="1.300" />
          <circle cx="13" cy="13" r="10.500" fill="none" stroke="#f0f6ff" strokeWidth="1.500" />
          <path d="M6.500 13h13M13 6.500v13" stroke="#32496f" strokeWidth="3" />
        </svg>
      </button>
    </div>
  </footer>
);

const TaskButton = ({ label, open = false, children }: { label: string; open?: boolean; children: ReactNode }) => (
  <button aria-label={label} className="relative flex h-full w-[75px] items-center justify-center">
    {children}
    {open && <span className="absolute inset-x-[7px] bottom-0 h-[3px] bg-[#76b9ed]" />}
  </button>
);

const TaskBar = () => (
  <footer className="flex h-[60px] shrink-0 items-center bg-linear-to-r from-[#2b2c30] via-[#40403a] via-55% to-[#332b2d] text-white">
    <button aria-label="开始" className="flex w-[72px] justify-center">
      <FaWindows className="h-7 w-6" />
    </button>
    <label className="flex h-full w-[515px] items-center gap-4 border-2 border-[#bdbdbd] bg-[#f2f2f2] pl-4 text-[#222]">
      <svg viewBox="0 0 26 26" className="h-[26px] w-[26px] shrink-0" fill="none" stroke="#111" strokeWidth="1.800">
        <circle cx="16.500" cy="9.500" r="8" />
        <path d="M11 15.500L1.500 25" />
      </svg>
      <input
        aria-label="搜索"
        placeholder="在这里输入你要搜索的内容"
        className="w-full bg-transparent text-2xl leading-8 outline-none placeholder:text-[#222]"
      />
    </label>
    <TaskButton label="Cortana">
      <svg viewBox="0 0 24 24" className="h-6 w-6" fill="none" stroke="#fff" strokeWidth="2.600">
        <circle cx="12" cy="12" r="10" />
      </svg>
    </TaskButton>
    <TaskButton label="Edge">
      <FaEdgeLegacy className="h-8 w-8 text-[#0a7ad8]" />
    </TaskButton>
    <TaskButton label="360">
      <svg viewBox="0 0 34 36" className="h-9 w-[34px]">
        <circle cx="17" cy="18" r="16" fill="#fff" />
        <circle cx="17" cy="18" r="14" fill="#5fc021" />
        <path d="M10 19.500h14.500c0-11-15-11-15-1 0 9 10.500 10 14 4.500" fill="none" stroke="#fff" strokeWidth="4.500" />
        <path d="M6 35C1 30 3 18 12 9 20 2 28 1 30 3" fill="none" stroke="#4aa81c" strokeWidth="2.200" />
      </svg>
    </TaskButton>
    <TaskButton label="Chrome" open>
      <svg viewBox="0 0 34 34" className="h-[34px] w-[34px]">
        <path d="M17 34a17 17 0 0 0 14.700-25.500H17l7.400 12.800z" fill="#ffcd40" />
        <path d="M2.300 8.500L9.600 21.300A8.500 8.500 0 0 1 17 8.500h14.700A17 17 0 0 0 2.300 8.500z" fill="#db4437" />
        <path d="M2.300 8.500A17 17 0 0 0 17 34l7.400-12.700A8.500 8.500 0 0 1 9.600 21.300z" fill="#0f9d58" />
        <circle cx="17" cy="17" r="8" fill="#f1f1f1" />
        <circle cx="17" cy="17" r="6.400" fill="#4285f4" />
      </svg>
    </TaskButton>
    <TaskButton label="有道" open>
      <span className="flex h-9 w-9 items-center justify-center rounded-lg bg-[#e62117] text-[15px] leading-5 font-black">
        有道
      </span>
    </TaskButton>
    <TaskButton label="微信" open>
      <svg viewBox="0 0 38 32" className="h-8 w-[38px]">
        <ellipse cx="14" cy="12" rx="13" ry="11" fill="#7ed44c" />
        <path d="M5 19l-1 6 6-3z" fill="#7ed44c" />
        <ellipse cx="9.500" cy="8.500" rx="1.800" ry="2" fill="#2c5c18" />
        <ellipse cx="18" cy="8.500" rx="1.800" ry="2" fill="#2c5c18" />
        <ellipse cx="26" cy="20" rx="11" ry="9.500" fill="#f3f3f3" />
        <path d="M31 27l3 4-8-2z" fill="#f3f3f3" />
        <circle cx="22.500" cy="17.500" r="1.500" fill="#555" />
        <circle cx="29.500" cy="17.500" r="1.500" fill="#555" />
      </svg>
    </TaskButton>
    <TaskButton label="文件资源管理器" open>
      <svg viewBox="0 0 34 28" className="h-7 w-[34px]">
        <path d="M1 0h13l3 4H1z" fill="#e6a100" />
        <path d="M1 4h14l3-2h15v24H1z" fill="#ffd568" />
        <path d="M6 28V16q0-2 2-2h18q2 0 2 2v12h-6v-7H12v7z" fill="#3a96dd" />
      </svg>
    </TaskButton>
    <button aria-label="Word" className="relative mx-0.5 flex h-full w-[73px] items-center border-r-[5px] border-[#55534f] bg-[#6b6966] pl-[17px]">
      <svg viewBox="0 0 36 36" className="h-9 w-9">
        <path d="M6 1h24v30H1V12C1 5 3 2 6 1z" fill="#3463b4" stroke="#c4d4f0" />
        <path d="M10 6l24 2v26L8 30z" fill="#f6f8fd" stroke="#aebfdf" />
        <path d="M12 10l3 11 3-9 3 9 3-11" fill="none" stroke="#1f479b" strokeWidth="2.400" />
        <path d="M26 12h6M26 16h6M24 20h8M13 25l18 1M13 29l18 1" stroke="#2c57ad" strokeWidth="2" />
      </svg>
      <span className="absolute bottom-0 left-0 h-[3px] w-[73px] bg-[#76b9ed]" />
    </button>
    <TaskButton label="Excel" open>
      <svg viewBox="0 0 36 36" className="h-9 w-9">
        <path d="M6 1h24v30H1V12C1 5 3 2 6 1z" fill="#9fc59c" stroke="#5fae4b" />
        <path d="M8 8l26 1v25L8 31z" fill="#f4faf2" stroke="#cfe3ca" />
        <path d="M12 11l9 12M21 11l-9 12" stroke="#226b1f" strokeWidth="3.500" />
        <path d="M24 12h7v5h-7zM24 19h7v5h-7zM24 26h7v5h-7zM16 26h6v5h-6zM10 25h4v5h-4z" fill="#6fae5d" />
      </svg>
    </TaskButton>

    <div className="ml-auto flex h-full items-center">
      <svg viewBox="0 0 26 26" className="mb-7 h-6 w-6">
        <path d="M2 4l20-3 3 20-20 4z" fill="#ee5322" />
        <path d="M19 7c-5-2-11-1-10 3 1 3 9 1 9 5 0 4-7 5-11 3" fill="none" stroke="#fff" strokeWidth="3.500" />
      </svg>
      <svg viewBox="0 0 36 34" className="ml-[22px] h-[34px] w-9">
        <circle cx="16" cy="16" r="15.500" fill="#fff" />
        <circle cx="16" cy="16" r="13" fill="#1296db" />
        <path d="M11 12c0-7 11-7 10.500 0-.3 4-5 4-5 9" fill="none" stroke="#fff" strokeWidth="3.500" />
        <circle cx="16.500" cy="25" r="2" fill="#fff" />
        <circle cx="28" cy="24" r="8" fill="#f01010" />
        <path d="M28 19v6M28 27v2" stroke="#fff" strokeWidth="2.500" />
      </svg>
      <svg viewBox="0 0 20 12" className="ml-3 h-3 w-5" fill="none" stroke="#fff" strokeWidth="1.500">
        <path d="M1 11l9-9 9 9" />
      </svg>
      <svg viewBox="0 0 24 18" className="ml-3.5 h-[18px] w-6" fill="none" stroke="#fff" strokeWidth="1.300">
        <path d="M8 5h14v11H6v-3" />
        <path d="M9 7h11v7H9z" fill="#fff" />
        <path d="M22 8h1.500v4H22M2 0v3M6 0v3M.5 3h7v3q0 2-3.500 2.500T.5 6zM4 9v7h3" />
      </svg>
      <svg viewBox="0 0 20 20" className="ml-4 h-5 w-5" fill="none" stroke="#fff" strokeWidth="1.400">
        <path d="M1 18C1 8 8 2 18 2" opacity=".5" />
        <path d="M5 19C5 11 10 6 18 6M9 19c0-5 4-9 9-9M13 19c0-3 2-5 5-5" />
        <circle cx="17" cy="18" r="1.200" fill="#fff" />
      </svg>
      <svg viewBox="0 0 24 20" className="ml-3 h-5 w-6" fill="none" stroke="#fff" strokeWidth="1.300">
        <path d="M1 7h3l6-6v18l-6-6H1zM13 7q2 3 0 6M16 4q4 6 0 12" />
        <path d="M19 2q5 8 0 16" opacity=".5" />
      </svg>
      <div className="ml-[18px] w-[90px] text-center text-[19px] leading-7">
        <p>21:36</p>
        <p>2020/4/5</p>
      </div>
      <button aria-label="通知" className="relative ml-8 h-10 w-9">
        <svg viewBox="0 0 36 40" className="h-10 w-9">
          <path d="M0 5h24v20H14l-5 6v-6H0z" fill="#fff" />
          <path d="M5 10h14M5 14.500h14M5 19h9" stroke="#333" strokeWidth="1.500" />
          <circle cx="24" cy="29" r="11" fill="#2e2a2b" stroke="#8c8a8a" />
        </svg>
        <span className="absolute right-0 bottom-0 w-6 text-center text-lg leading-[22px] font-bold">5</span>
      </button>
      <span className="ml-[17px] h-full w-2 border-l border-[#6b6869]" />
    </div>
  </footer>
);

export default function App() {
  return (
    <div className={`relative flex h-screen flex-col overflow-hidden bg-[#a3c2eb] ${UI}`}>
      <OfficeButton />
      <TitleBar />
      <TabRow />
      <div className="mx-px flex h-[143px] shrink-0 gap-[3px] rounded-[3px] border border-[#8db2e3] bg-linear-to-b from-[#dde8f4] via-[#c9daec] via-20% to-[#e2f5ff] px-0.5 pt-px">
        <Clipboard />
        <FontGroup />
        <ParagraphGroup />
        <StylesGroup />
        <EditingGroup />
      </div>
      <QuickAccess />
      <div className="h-1 shrink-0" />
      <Workspace />
      <StatusBar />
      <TaskBar />
    </div>
  );
}
